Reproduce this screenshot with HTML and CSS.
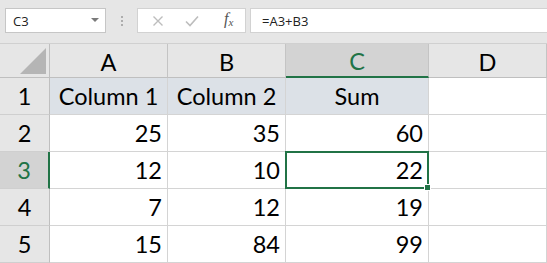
FILE: index.html
```html
<!DOCTYPE html>
<html>
<head>
<meta charset="utf-8">
<link rel="stylesheet" href="styles.css">
</head>
<body>
<div class="app">
  <div class="toolbar">
    <div class="namebox">
      <span class="name">C3</span>
      <span class="caret"></span>
    </div>
    <div class="grip"><i></i><i></i><i></i></div>
    <div class="fbuttons">
      <svg class="ico" width="12" height="12" viewBox="0 0 12 12"><path d="M1.5 1.5 L10.5 10.5 M10.5 1.5 L1.5 10.5" stroke="#bdbdbd" stroke-width="1.4" fill="none"/></svg>
      <svg class="ico" width="14" height="12" viewBox="0 0 14 12"><path d="M1 6.5 L5 10.5 L13 1.5" stroke="#bdbdbd" stroke-width="1.6" fill="none"/></svg>
      <span class="fx">f<sub>x</sub></span>
    </div>
    <div class="formula">=A3+B3</div>
  </div>
  <div class="sheet">
    <div class="corner"><span class="tri"></span></div>
    <div class="colh">A</div>
    <div class="colh">B</div>
    <div class="colh sel">C</div>
    <div class="colh last">D</div>

    <div class="rowh">1</div>
    <div class="cell hdr">Column 1</div>
    <div class="cell hdr">Column 2</div>
    <div class="cell hdr">Sum</div>
    <div class="cell last"></div>

    <div class="rowh">2</div>
    <div class="cell num">25</div>
    <div class="cell num">35</div>
    <div class="cell num">60</div>
    <div class="cell last"></div>

    <div class="rowh sel">3</div>
    <div class="cell num">12</div>
    <div class="cell num">10</div>
    <div class="cell num active">22</div>
    <div class="cell last"></div>

    <div class="rowh">4</div>
    <div class="cell num">7</div>
    <div class="cell num">12</div>
    <div class="cell num">19</div>
    <div class="cell last"></div>

    <div class="rowh">5</div>
    <div class="cell num">15</div>
    <div class="cell num">84</div>
    <div class="cell num">99</div>
    <div class="cell last"></div>
  </div>
</div>
</body>
</html>
```
FILE: styles.css
```css
* { box-sizing: border-box; }
html, body { margin: 0; padding: 0; }
body {
  width: 547px;
  height: 263px;
  overflow: hidden;
  background: #e6e6e6;
  font-family: "Open Sans", "Noto Sans", sans-serif;
}
.app { display: flex; flex-direction: column; }
.toolbar {
  height: 44px;
  display: flex;
  align-items: flex-start;
  padding-top: 8px;
  padding-left: 5px;
  background: #e6e6e6;
  border-bottom: 1px solid #d0d0d0;
}
.namebox {
  width: 101px;
  height: 25px;
  background: #fff;
  border: 1px solid #c6c6c6;
  display: flex;
  align-items: center;
  justify-content: space-between;
  padding: 0 6px 0 7px;
  font-size: 13px;
  color: #222;
}
.caret {
  width: 0; height: 0;
  border-left: 4px solid transparent;
  border-right: 4px solid transparent;
  border-top: 4px solid #7a7a7a;
  margin-top: -2px;
}
.grip {
  width: 31px;
  height: 25px;
  display: flex;
  flex-direction: column;
  align-items: center;
  justify-content: center;
  gap: 2px;
}
.grip i {
  display: block;
  width: 2px; height: 2px;
  background: #adadad;
}
.fbuttons {
  width: 109px;
  height: 25px;
  background: #fff;
  border: 1px solid #d2d2d2;
  display: flex;
  align-items: center;
  padding-left: 14px;
  gap: 21px;
}
.fbuttons .ico { display: block; }
.fx {
  font-family: "Liberation Serif", serif;
  font-style: italic;
  font-size: 16px;
  color: #555;
  margin-left: 4px;
  line-height: 1;
  margin-top: -3px;
}
.fx sub { font-size: 11px; vertical-align: -2px; }
.formula {
  margin-left: 4px;
  flex: 1;
  height: 25px;
  background: #fff;
  border: 1px solid #d2d2d2;
  border-right: none;
  display: flex;
  align-items: center;
  padding-left: 11px;
  font-size: 13px;
  color: #222;
}
.sheet {
  display: grid;
  grid-template-columns: 50px 118px 118px 143px 118px;
  grid-template-rows: 34px repeat(5, 37px);
  font-family: "Lato", "Open Sans", sans-serif;
  font-size: 23.5px;
  color: #000;
  background: #fff;
}
.corner {
  background: #e6e6e6;
  border-right: 1px solid #bfbfbf;
  border-bottom: 1px solid #bfbfbf;
  position: relative;
}
.tri {
  position: absolute;
  right: 3px;
  bottom: 3px;
  width: 0; height: 0;
  border-left: 26px solid transparent;
  border-bottom: 26px solid #b5b5b5;
}
.colh {
  background: #e6e6e6;
  border-right: 1px solid #c4c4c4;
  border-bottom: 1px solid #bfbfbf;
  display: flex;
  align-items: center;
  justify-content: center;
  padding-top: 2px;
}
.colh.sel {
  background: #d3d3d3;
  color: #217346;
  border-bottom: 2px solid #217346;
}
.rowh {
  background: #e6e6e6;
  border-right: 1px solid #bfbfbf;
  border-bottom: 1px solid #cfcfcf;
  display: flex;
  align-items: center;
  justify-content: center;
}
.rowh.sel {
  background: #d3d3d3;
  color: #217346;
  border-right: 2px solid #217346;
}
.cell {
  border-right: 1px solid #d4d4d4;
  border-bottom: 1px solid #d4d4d4;
  display: flex;
  align-items: center;
  padding: 0 5px;
}
.cell.hdr {
  background: #dce1e7;
  justify-content: center;
}
.cell.num { justify-content: flex-end; }
.cell.active { position: relative; }
.cell.active::after {
  content: "";
  position: absolute;
  left: -1px; top: -1px; right: -1px; bottom: -1px;
  border: 2px solid #217346;
}
.cell.active::before {
  content: "";
  position: absolute;
  right: -3px; bottom: -3px;
  width: 5px; height: 5px;
  background: #217346;
  border: 1px solid #fff;
  z-index: 2;
}
```
